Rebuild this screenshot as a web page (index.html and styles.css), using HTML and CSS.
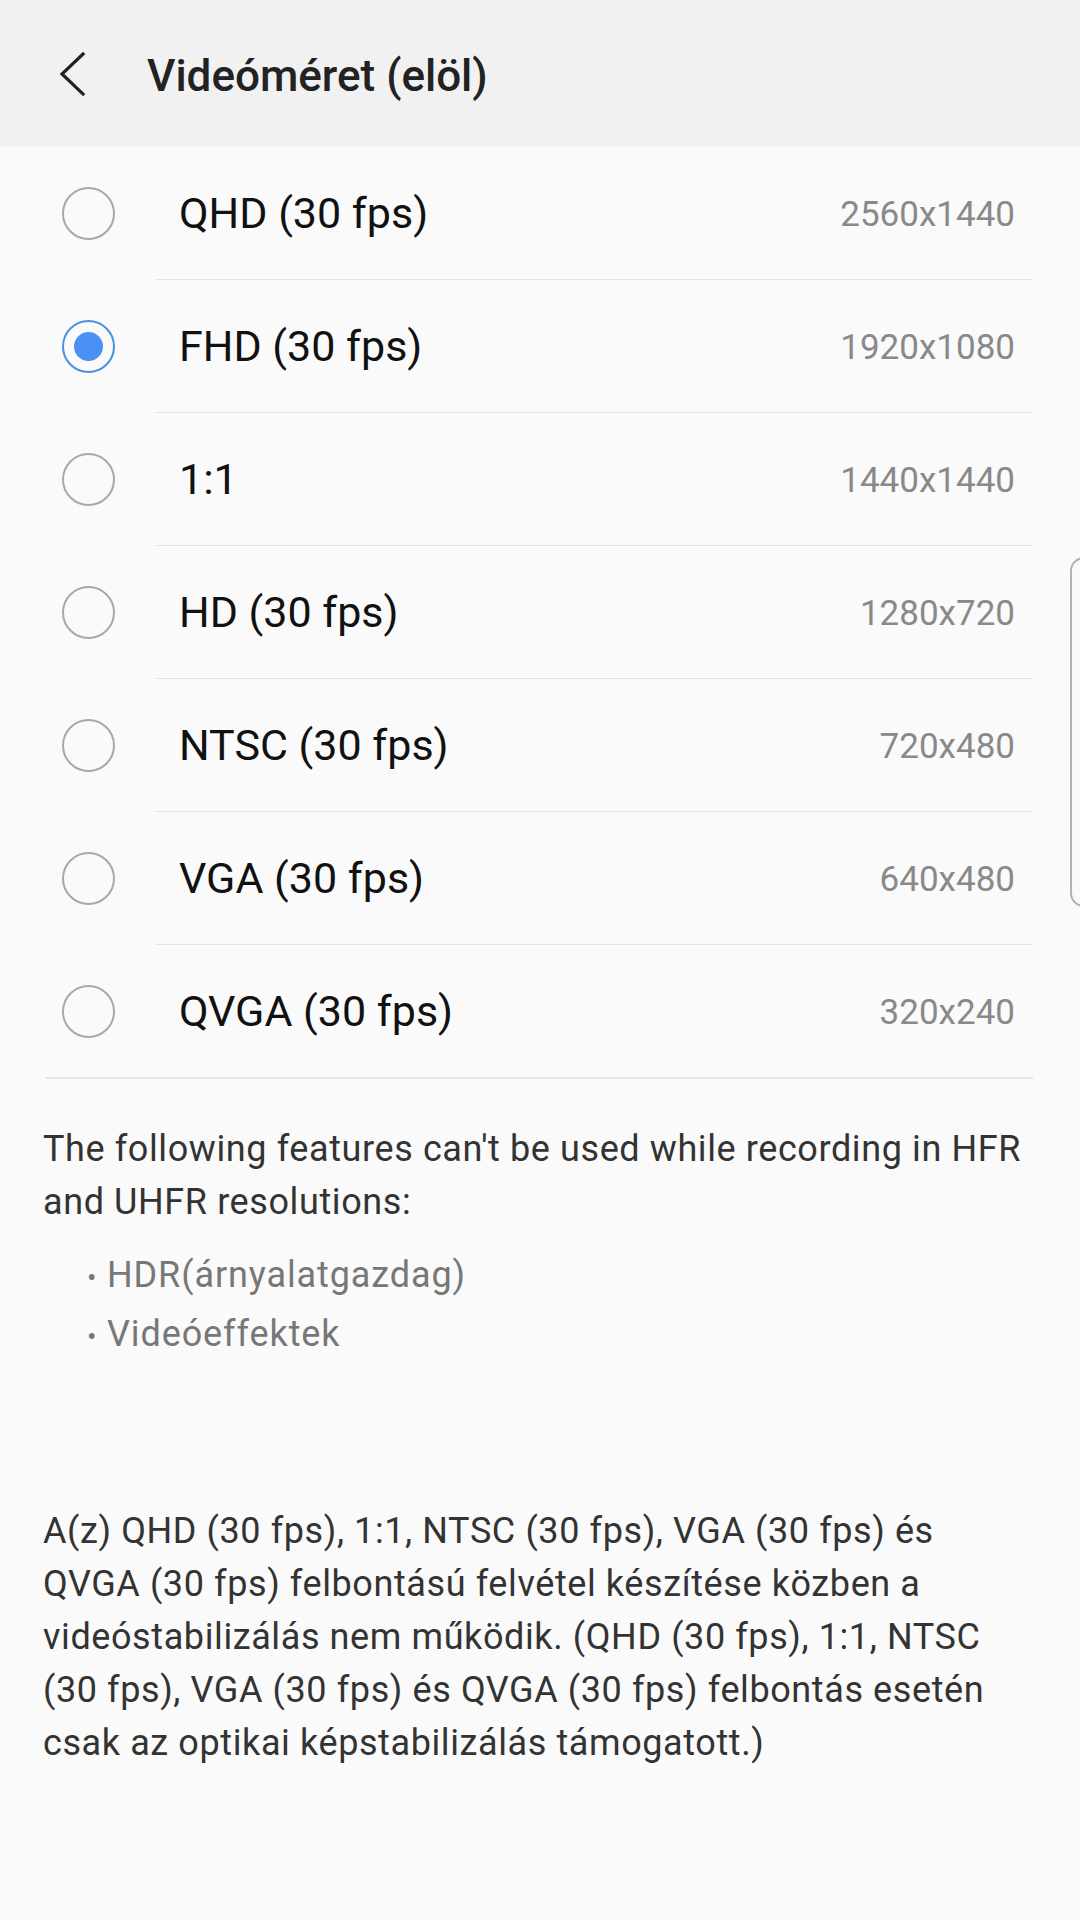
FILE: index.html
```html
<!DOCTYPE html>
<html lang="hu">
<head>
<meta charset="utf-8">
<title>Videóméret (elöl)</title>
<link rel="stylesheet" href="styles.css">
</head>
<body>
<header class="appbar">
  <svg class="back" width="30" height="46" viewBox="0 0 30 46" aria-hidden="true">
    <polyline points="26,3 5,23 26,43" fill="none" stroke="#222" stroke-width="3.2" stroke-linecap="square" stroke-linejoin="miter"/>
  </svg>
  <h1 class="title">Videóméret (elöl)</h1>
</header>

<main>
  <ul class="list">
    <li class="row"><span class="radio"></span><div class="row-body"><span class="label">QHD (30 fps)</span><span class="res">2560x1440</span></div></li>
    <li class="row"><span class="radio checked"></span><div class="row-body"><span class="label">FHD (30 fps)</span><span class="res">1920x1080</span></div></li>
    <li class="row"><span class="radio"></span><div class="row-body"><span class="label">1:1</span><span class="res">1440x1440</span></div></li>
    <li class="row"><span class="radio"></span><div class="row-body"><span class="label">HD (30 fps)</span><span class="res">1280x720</span></div></li>
    <li class="row"><span class="radio"></span><div class="row-body"><span class="label">NTSC (30 fps)</span><span class="res">720x480</span></div></li>
    <li class="row"><span class="radio"></span><div class="row-body"><span class="label">VGA (30 fps)</span><span class="res">640x480</span></div></li>
    <li class="row last"><span class="radio"></span><div class="row-body"><span class="label">QVGA (30 fps)</span><span class="res">320x240</span></div></li>
  </ul>
  <div class="list-end"></div>

  <section class="notes">
    <p class="para">The following features can't be used while recording in HFR and UHFR resolutions:</p>
    <ul class="bullets">
      <li>HDR(árnyalatgazdag)</li>
      <li>Videóeffektek</li>
    </ul>
    <p class="para para-second">A(z) QHD (30 fps), 1:1, NTSC (30 fps), VGA (30 fps) és QVGA (30 fps) felbontású felvétel készítése közben a videóstabilizálás nem működik. (QHD (30 fps), 1:1, NTSC (30 fps), VGA (30 fps) és QVGA (30 fps) felbontás esetén csak az optikai képstabilizálás támogatott.)</p>
  </section>
</main>

<div class="scroll-handle"></div>
</body>
</html>
```

FILE: styles.css
```css
* { box-sizing: border-box; }

html, body {
  margin: 0;
  padding: 0;
}

body {
  width: 1080px;
  min-height: 1920px;
  background: #fafafa;
  font-family: Roboto, "Noto Sans", "Liberation Sans", sans-serif;
  position: relative;
  overflow: hidden;
}

.appbar {
  height: 147px;
  background: #f1f1f1;
  display: flex;
  align-items: center;
  padding-left: 57px;
}

.back {
  display: block;
  flex: none;
}

.title {
  margin: 0 0 0 60px;
  padding-top: 4px;
  font-size: 44px;
  font-weight: 500;
  color: #222;
  line-height: normal;
}

.list {
  list-style: none;
  margin: 0;
  padding: 0;
}

.row {
  display: flex;
  align-items: center;
  padding-left: 62px;
}

.radio {
  flex: none;
  width: 53px;
  height: 53px;
  border-radius: 50%;
  border: 2px solid #a8a8a8;
  display: flex;
  align-items: center;
  justify-content: center;
}

.radio.checked {
  border-color: #4a8fe6;
}

.radio.checked::after {
  content: "";
  width: 29px;
  height: 29px;
  border-radius: 50%;
  background: #4b90f4;
}

.row-body {
  flex: 1;
  height: 133px;
  margin-left: 41px;
  margin-right: 47px;
  padding: 0 18px 0 23px;
  border-bottom: 1px solid #e3e3e3;
  display: flex;
  align-items: center;
  justify-content: space-between;
}

.row.last .row-body {
  border-bottom: none;
  height: 132px;
}

.label {
  font-size: 43px;
  color: #111;
}

.res {
  font-size: 35px;
  color: #898989;
  padding-top: 3px;
}

.list-end {
  margin: 0 47px 0 46px;
  border-bottom: 2px solid #e3e3e3;
}

.notes {
  padding: 44px 43px 0 43px;
}

.para {
  margin: 0;
  font-size: 36px;
  letter-spacing: 0.6px;
  line-height: 53px;
  color: #333;
}

.bullets {
  list-style: none;
  margin: 18px 0 0 0;
  padding: 0 0 0 44px;
  font-size: 36px;
  letter-spacing: 0.9px;
  line-height: 57px;
  color: #777;
}

.bullets li::before {
  content: "•";
  display: inline-block;
  width: 20px;
  font-size: 28px;
  letter-spacing: 0;
}

.para-second {
  margin-top: 140px;
}

.scroll-handle {
  position: absolute;
  left: 1070px;
  top: 557px;
  width: 30px;
  height: 350px;
  border: 2px solid #b3b3b3;
  border-radius: 14px;
}
```
